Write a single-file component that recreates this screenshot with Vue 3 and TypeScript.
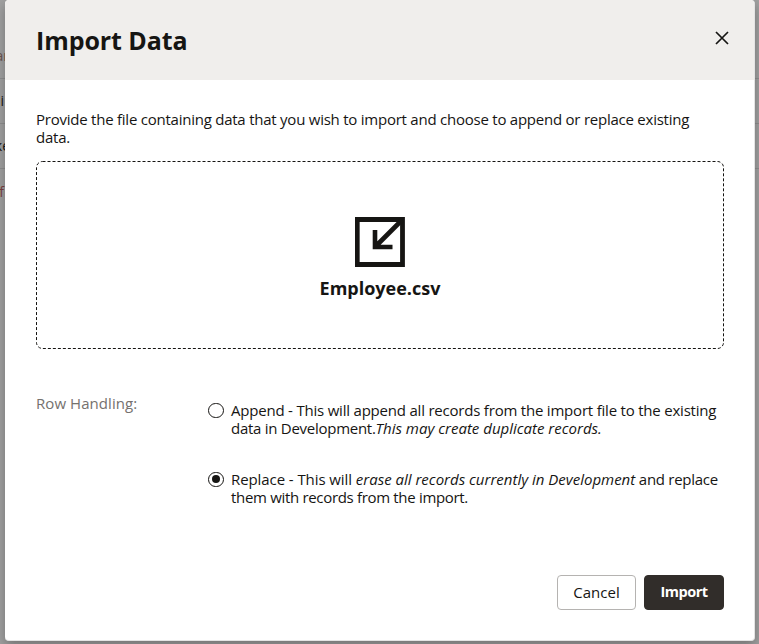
<script setup lang="ts">
import { ref } from 'vue'

const mode = ref<'append' | 'replace'>('replace')
const rows = ['ar', 'i', 'ke', 'f']
</script>

<template>
  <div class="page">
    <div class="backdrop">
      <div v-for="(r, i) in rows" :key="r" class="back-row" :class="'row-' + i"><span class="clip">{{ r }}</span></div>
    </div>
    <section class="dialog">
      <header class="head">
        <h1>Import Data</h1>
        <button class="close" aria-label="Close">
          <svg width="14" height="14" viewBox="0 0 14 14"><path d="M1 1L13 13M13 1L1 13" fill="none" stroke="#161513" stroke-width="1.7" /></svg>
        </button>
      </header>
      <div class="body">
        <p class="intro">Provide the file containing data that you wish to import and choose to append or replace existing<br>data.</p>
        <div class="drop">
          <svg class="outline" width="688" height="188"><rect x=".5" y=".5" width="687" height="187" rx="6" fill="none" stroke="#161513" stroke-dasharray="3 2" /></svg>
          <svg width="50" height="50" viewBox="0 0 50 50">
            <path d="M2.25 2.5H47.5V47.5H2.25Z" fill="none" stroke="#161513" stroke-width="4.8" />
            <path d="M20 13V30H37.5M20.5 29.5L47 3" fill="none" stroke="#161513" stroke-width="4.6" />
          </svg>
          <strong class="file">Employee.csv</strong>
        </div>
        <div class="handling">
          <span class="label">Row Handling:</span>
          <div class="options">
            <div class="option" @click="mode = 'append'">
              <i class="radio" :class="{ on: mode === 'append' }"></i>
              <p><span class="normal">Append - This will append all records from the import file to the existing</span><br><span class="snug">data in Development.</span><em>This may create duplicate records.</em></p>
            </div>
            <div class="option" @click="mode = 'replace'">
              <i class="radio" :class="{ on: mode === 'replace' }"></i>
              <p><span class="loose">Replace - This will </span><em>erase all records currently in Development</em><span class="snug"> and replace</span><br><span class="tight">them with records from the import.</span></p>
            </div>
          </div>
        </div>
      </div>
      <footer class="foot">
        <button class="btn">Cancel</button>
        <button class="btn primary">Import</button>
      </footer>
    </section>
  </div>
</template>

<style>
body { margin: 0; overflow: hidden; }
</style>

<style scoped>
* { box-sizing: border-box; }
.page { position: relative; width: 759px; height: 644px; padding: 0 4px 4px 5px; overflow: hidden; background: #a0a0a0; color: #161513; font: 15px/18px "Open Sans", sans-serif; }
.backdrop { position: absolute; inset: 0; padding-top: 34px; }
.back-row { display: flex; align-items: center; height: 45px; border-bottom: 1px solid #8e8e8e; }
.row-3 { border: 0; }
.clip { width: 4px; display: flex; justify-content: flex-end; font-size: 14px; }
.row-0 { color: #6d5550; }
.row-0 .clip { width: 9px; }
.row-2 .clip { width: 10px; }
.row-3 { color: #7c4040; }
.dialog { position: relative; width: 750px; height: 641px; background: #fff; border: 1px solid #e4e4e4; border-width: 0 1px 1px 0; border-radius: 4px; box-shadow: 0 5px 12px 0 rgba(0,0,0,.28); display: flex; flex-direction: column; }
.head { height: 80px; flex: none; background: #f0eeec; border-radius: 4px 4px 0 0; display: flex; justify-content: space-between; align-items: flex-start; padding: 25px 25.5px 0 31px; }
h1 { margin: 0; font-size: 25px; line-height: 30px; font-weight: 700; letter-spacing: -.08px; white-space: nowrap; }
.close { border: 0; background: none; padding: 0; margin-top: 6px; width: 14px; height: 14px; display: block; }
.close svg { display: block; }
.body { flex: 1; padding: 30px 0 0 31px; }
p { margin: 0; white-space: nowrap; }
.intro { letter-spacing: -.237px; }
.normal { letter-spacing: -.207px; }
.snug { letter-spacing: -.27px; }
.loose { letter-spacing: -.08px; }
.tight { letter-spacing: -.32px; }
.drop { position: relative; width: 688px; height: 188px; margin-top: 15px; display: flex; flex-direction: column; align-items: center; padding-top: 56px; }
.outline { position: absolute; left: 0; top: 0; }
.file { font-size: 18px; line-height: 24px; margin-top: 9px; }
.handling { display: flex; margin-top: 45px; }
.label { width: 172px; color: #75716e; letter-spacing: .06px; }
.options { display: flex; flex-direction: column; gap: 33px; padding-top: 7px; }
.option { display: flex; gap: 7.5px; }
.radio { width: 15.5px; height: 15.5px; border: 1.2px solid #161513; border-radius: 50%; margin-top: 1.5px; display: flex; align-items: center; justify-content: center; }
.on::after { content: ""; width: 8px; height: 8px; border-radius: 50%; background: #161513; }
.foot { display: flex; justify-content: flex-end; gap: 8px; padding: 0 30px 30px 0; }
.btn { width: 79px; height: 35px; border: 1px solid #b5b3b1; border-radius: 4px; background: #fff; color: #161513; font: 15px/18px "Open Sans", sans-serif; padding: 0 0 2px; }
.primary { width: 80px; background: #312d2a; border-color: #312d2a; color: #fff; font-weight: 700; font-size: 14.5px; letter-spacing: -.5px; }
</style>
